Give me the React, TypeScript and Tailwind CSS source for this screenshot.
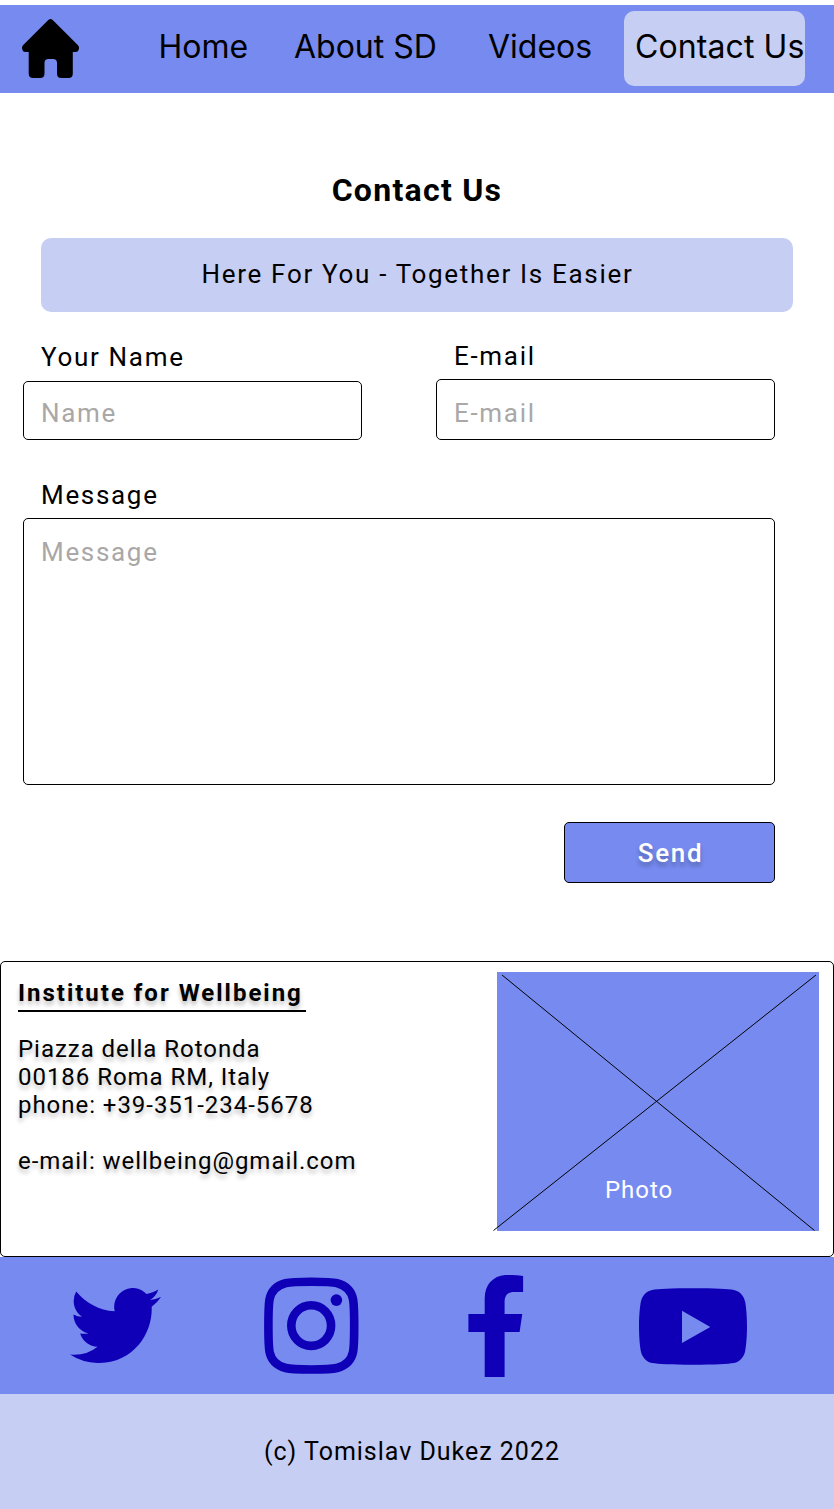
import React from "react";

const HomeIcon = () => (
  <svg viewBox="0 0 57 59" className="h-[59px] w-[57px]" fill="#000">
    <path d="M26.3 1Q28.5-.9 30.7 1L56 26.300Q57.300 28 57 29.500Q56.400 33 53.500 33H50.800V54.500Q50.800 59 46.300 59H39.300Q35 59 35 54.500V44Q35 40 31 40H26.500Q22.500 40 22.500 44V54.500Q22.500 59 18 59H11.200Q6.700 59 6.700 54.500V33H3.500Q.6 33 .1 29.500Q-.3 28 1 26.300Z" />
  </svg>
);

const TwitterIcon = () => (
  <svg viewBox="0 2.250 24 19.500" preserveAspectRatio="none" className="h-[75px] w-[91px]" fill="#0f00b8">
    <path d="M23.953 4.57a10 10 0 01-2.825.775 4.958 4.958 0 002.163-2.723c-.951.555-2.005.959-3.127 1.184a4.92 4.92 0 00-8.384 4.482C7.69 8.095 4.067 6.13 1.64 3.162a4.822 4.822 0 00-.666 2.475c0 1.71.87 3.213 2.188 4.096a4.904 4.904 0 01-2.228-.616v.06a4.923 4.923 0 003.946 4.827 4.996 4.996 0 01-2.212.085 4.936 4.936 0 004.604 3.417 9.867 9.867 0 01-6.102 2.105c-.39 0-.779-.023-1.17-.067a13.995 13.995 0 007.557 2.209c9.053 0 13.998-7.496 13.998-13.985 0-.21 0-.42-.015-.63A9.935 9.935 0 0024 4.590z" />
  </svg>
);

const InstagramIcon = () => (
  <svg viewBox="0 0 95 97" className="h-[97px] w-[95px]" fill="none" stroke="#0f00b8" strokeWidth="8.600">
    <path d="M47.300 4.700C61 4.700 68 4.900 73 6.200C82 8.600 87.500 14.300 89.100 22.500C90 27.500 90.200 35 90.200 48.600C90.200 62.200 90 69.700 89.100 74.700C87.500 82.900 82 88.600 73 91C68 92.300 61 92.500 47.300 92.500C33.600 92.500 26.600 92.300 21.600 91C12.600 88.600 7.100 82.900 5.500 74.700C4.600 69.700 4.400 62.200 4.400 48.600C4.400 35 4.600 27.500 5.500 22.500C7.100 14.300 12.600 8.600 21.600 6.200C26.600 4.900 33.600 4.700 47.300 4.700Z" />
    <ellipse cx="47.200" cy="48.600" rx="19.900" ry="20.300" />
    <circle cx="72.400" cy="23.100" r="5.800" fill="#0f00b8" stroke="none" />
  </svg>
);

const FacebookIcon = () => (
  <svg viewBox="0 0 56 103" className="h-[103px] w-[56px]" fill="#0f00b8">
    <path d="M16.700 102V57H.4V39H16.700V23.500C16.700 8.500 26.500 0 39.500 0Q46 0 55.100 1V17H46C39.500 17 36.600 21 36.600 27V39H54.300L51.600 57H36.600V102Z" transform="translate(0 -.1)" />
  </svg>
);

const YoutubeIcon = () => (
  <svg viewBox="0 0 108 77" className="h-[77px] w-[108px]" fill="#0f00b8" fillRule="evenodd">
    <path d="M54 .2C76 .2 89 .9 95 1.900C101 3.200 105 8 106.200 14C107.300 20 108 29 108 38.500C108 48 107.300 57 106.200 63C105 69 101 73.800 95 75.100C89 76.100 76 76.800 54 76.800C32 76.800 19 76.100 13 75.100C7 73.800 3 69 1.800 63C.7 57 0 48 0 38.500C0 29 .7 20 1.800 14C3 8 7 3.200 13 1.900C19 .9 32 .2 54 .2ZM43 22.700V55L71.300 38.900Z" />
  </svg>
);

export default function App() {
  return (
    <div className="flex h-[1509px] w-[834px] flex-col overflow-hidden bg-white pt-[5px] font-['Roboto',sans-serif] text-black">
      <header className="flex h-[88px] shrink-0 bg-[#768aef] font-['Inter',sans-serif] text-[32px]">
        <a href="#" className="ml-[22px] mt-[14px] w-[136px]"><HomeIcon /></a>
        <nav className="flex whitespace-nowrap pt-[6px] leading-[72px]">
          <a href="#" className="w-[136px] pl-[0.5px]">Home</a>
          <a href="#" className="w-[194px]">About SD</a>
          <a href="#" className="w-[136px]">Videos</a>
          <a href="#" className="h-[75px] w-[181px] rounded-[10px] bg-[#c7cef3] pl-[11px] tracking-[0.1px]">Contact Us</a>
        </nav>
      </header>

      <main className="flex h-[868px] shrink-0 flex-col text-[26px] tracking-[1.680px]">
        <h1 className="mt-[78px] text-center text-[32px] font-bold leading-[38px] tracking-[1.280px]">Contact Us</h1>
        <p className="mx-[41px] mt-[29px] h-[74px] rounded-[10px] bg-[#c7cef3] pl-[1px] text-center leading-[72px]">Here For You - Together Is Easier</p>
        <form className="flex flex-col pl-[23px]">
          <div className="flex">
            <div className="w-[413px]">
              <label htmlFor="name" className="mt-[30px] block pl-[18px] leading-[30px]">Your Name</label>
              <input id="name" placeholder="Name" className="mt-[9px] block h-[59px] w-[339px] rounded-[5px] border border-black pl-[17px] pt-[5px] placeholder:text-[#aaa7a7]" />
            </div>
            <div>
              <label htmlFor="email" className="mt-[29px] block pl-[18px] leading-[30px]">E-mail</label>
              <input id="email" placeholder="E-mail" className="mt-[8px] block h-[61px] w-[339px] rounded-[5px] border border-black pl-[17px] pt-[7px] placeholder:text-[#aaa7a7]" />
            </div>
          </div>
          <label htmlFor="message" className="mt-[40px] block pl-[18px] leading-[30px]">Message</label>
          <textarea id="message" placeholder="Message" className="mt-[8px] block h-[267px] w-[752px] resize-none rounded-[5px] border border-black pl-[17px] pt-[18px] leading-[30px] placeholder:text-[#aaa7a7]" />
          <button type="button" className="ml-[541px] mt-[37px] h-[61px] w-[211px] rounded-[5px] border border-black bg-[#768aef] pl-[2px] pt-[2px] font-medium tracking-[1.680px] text-white [text-shadow:0_4px_4px_rgba(0,0,0,0.25)]">Send</button>
        </form>
      </main>

      <section className="flex h-[296px] shrink-0 rounded-[5px] border border-black text-[24px] leading-[28px] tracking-[0.960px]">
        <div className="w-[496px] pl-[17px] pt-[17px] [text-shadow:0_4px_4px_rgba(0,0,0,0.25)]">
          <h2 className="h-[33px] w-[288px] whitespace-nowrap border-b-2 border-black font-bold tracking-[1.990px]">Institute for Wellbeing</h2>
          <address className="mt-[23px] not-italic">
            Piazza della Rotonda<br />
            00186 Roma RM, Italy<br />
            phone: +39-351-234-5678<br />
            <br />
            e-mail: wellbeing@gmail.com
          </address>
        </div>
        <div className="relative mt-[10px] h-[259px] w-[322px] bg-[#768aef]">
          <svg viewBox="0 0 322 259" className="absolute left-0 top-0 h-[259px] w-[322px] overflow-visible" stroke="#000" strokeWidth="1">
            <path d="M5 3L317.500 258.500M319 3L-3.500 258.500" />
          </svg>
          <span className="block pl-[108px] pt-[204px] text-white">Photo</span>
        </div>
      </section>

      <div className="flex h-[137px] shrink-0 bg-[#768aef]">
        <a href="#" className="ml-[70px] mt-[31px] w-[194px]"><TwitterIcon /></a>
        <a href="#" className="mt-[20px] w-[204px]"><InstagramIcon /></a>
        <a href="#" className="mt-[18px] w-[171px]"><FacebookIcon /></a>
        <a href="#" className="mt-[31px]"><YoutubeIcon /></a>
      </div>
      <footer className="h-[115px] shrink-0 bg-[#c7cef3] pl-[264px] text-[25px] leading-[115px] tracking-[0.980px]">(c) Tomislav Dukez 2022</footer>
    </div>
  );
}
